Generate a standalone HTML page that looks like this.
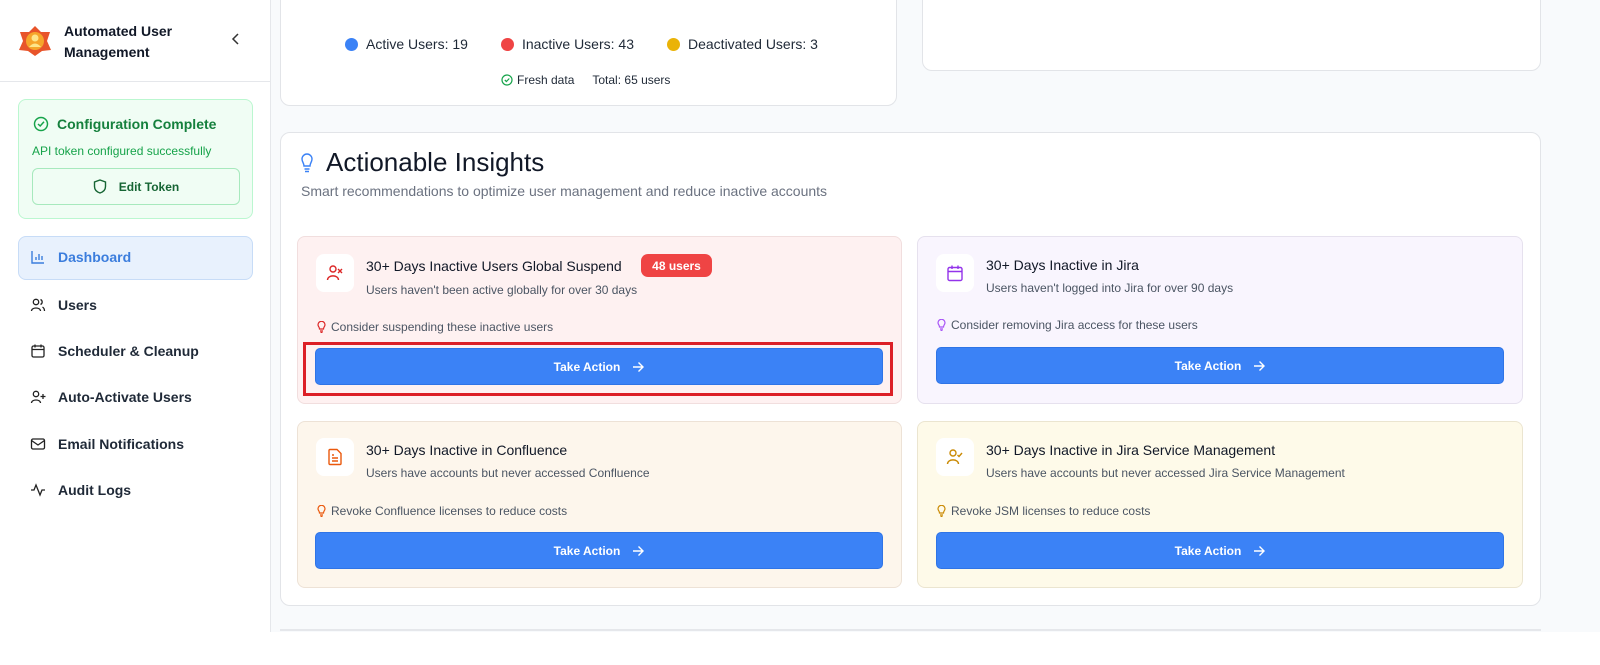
<!DOCTYPE html>
<html><head><meta charset="utf-8"><style>
*{box-sizing:border-box;margin:0;padding:0}
body{width:1600px;height:665px;overflow:hidden;background:#fff;font-family:"Liberation Sans",sans-serif;color:#111827;position:relative}
.abs{position:absolute}
.side{left:0;top:0;width:271px;height:632px;background:#fff;border-right:1px solid #e5e7eb}
.main{left:271px;top:0;width:1329px;height:632px;background:#f8fafc}
.card{background:#fff;border:1px solid #e2e4e8;border-radius:10px}
.nav{position:absolute;left:30px;font-size:14px;font-weight:bold;color:#1f2937;display:flex;align-items:center;gap:12px}
.ic{border-radius:8px;background:#fff;width:38px;height:38px;display:flex;align-items:center;justify-content:center}
.ttl{font-size:14px;color:#111827}
.sub{font-size:12px;color:#4b5563}
.tip{font-size:12px;color:#4b5563;display:flex;align-items:center;gap:5px}
.btn{position:absolute;background:#3b82f6;border-radius:5px;color:#fff;font-size:12px;font-weight:bold;display:flex;align-items:center;justify-content:center;gap:12px;border:1px solid #2f74e6}
</style></head><body>
<div class="abs side">
 <svg class="abs" style="left:17px;top:24px" width="36" height="34" viewBox="0 0 36 34"><path d="M18 2 L24 8 L33 8 L30 17 L34 26 L25 27 L18 32 L11 27 L2 26 L6 17 L3 8 L12 8Z" fill="#e8542a"/><circle cx="18" cy="17" r="9" fill="#f6a52a"/><circle cx="18" cy="14" r="3.5" fill="#fde68a"/><path d="M12 23 Q18 16 24 23" fill="#fde68a"/></svg>
 <div class="abs" style="left:64px;top:21px;font-size:14px;font-weight:bold;line-height:21px">Automated User<br>Management</div>
 <svg class="abs" style="left:231px;top:33px" width="10" height="12" viewBox="0 0 10 12"><path d="M7 1 L2 6 L7 11" stroke="#333" stroke-width="1.5" fill="none"/></svg>
 <div class="abs" style="left:0;top:81px;width:270px;border-top:1px solid #e5e7eb"></div>
 <div class="abs" style="left:18px;top:99px;width:235px;height:120px;background:#f0fdf4;border:1px solid #bbf7d0;border-radius:8px">
  <svg class="abs" style="left:14px;top:16px" width="16" height="16" viewBox="0 0 16 16"><circle cx="8" cy="8" r="6.5" stroke="#16a34a" stroke-width="1.5" fill="none"/><path d="M5 8 L7.2 10 L11 5.8" stroke="#16a34a" stroke-width="1.5" fill="none"/></svg>
  <div class="abs" style="left:38px;top:16px;font-size:14px;font-weight:bold;color:#15803d">Configuration Complete</div>
  <div class="abs" style="left:13px;top:44px;font-size:12px;color:#16a34a">API token configured successfully</div>
  <div class="abs" style="left:13px;top:68px;width:208px;height:37px;border:1px solid #a7e9bd;border-radius:6px;display:flex;align-items:center;justify-content:center;gap:12px;font-size:12px;font-weight:bold;color:#166534">
   <svg width="14" height="15" viewBox="0 0 14 15"><path d="M7 1 L12.5 3 V7.5 C12.5 11 10 13 7 14 C4 13 1.5 11 1.5 7.5 V3Z" stroke="#166534" stroke-width="1.4" fill="none"/></svg>Edit Token</div>
 </div>
 <div class="abs" style="left:18px;top:236px;width:235px;height:44px;background:#e8f1fd;border:1px solid #c7dcf7;border-radius:8px"></div>
 <div class="nav" style="top:249px;color:#3b7ddd"><svg width="16" height="16" viewBox="0 0 16 16" fill="none" stroke="#3b7ddd" stroke-width="1.4"><path d="M2 2 V14 H14 M6 11 V8 M9 11 V5 M12 11 V7"/></svg>Dashboard</div>
 <div class="nav" style="top:297px"><svg width="16" height="16" viewBox="0 0 16 16" fill="none" stroke="#222" stroke-width="1.3"><circle cx="6" cy="5" r="2.7"/><path d="M1.5 14 C1.5 10 10.5 10 10.5 14 M10.5 2.5 A2.7 2.7 0 0 1 10.5 7.5 M12.5 10 C14 11 14.5 12.5 14.5 14"/></svg>Users</div>
 <div class="nav" style="top:343px"><svg width="16" height="16" viewBox="0 0 16 16" fill="none" stroke="#222" stroke-width="1.3"><rect x="2" y="3" width="12" height="11" rx="1.5"/><path d="M2 6.5 H14 M5 1.5 V4.5 M11 1.5 V4.5"/></svg>Scheduler &amp; Cleanup</div>
 <div class="nav" style="top:389px"><svg width="16" height="16" viewBox="0 0 16 16" fill="none" stroke="#222" stroke-width="1.3"><circle cx="6" cy="5" r="2.7"/><path d="M1.5 14 C1.5 10 10.5 10 10.5 14 M13 5 V10 M10.5 7.5 H15.5"/></svg>Auto-Activate Users</div>
 <div class="nav" style="top:436px"><svg width="16" height="16" viewBox="0 0 16 16" fill="none" stroke="#222" stroke-width="1.3"><rect x="1.5" y="3" width="13" height="10" rx="1.5"/><path d="M1.5 4.5 L8 9 L14.5 4.5"/></svg>Email Notifications</div>
 <div class="nav" style="top:482px"><svg width="16" height="16" viewBox="0 0 16 16" fill="none" stroke="#222" stroke-width="1.3"><path d="M1 8 H4 L6 3 L10 13 L12 8 H15"/></svg>Audit Logs</div>
</div>
<div class="abs main"></div>
<div class="abs card" style="left:280px;top:-10px;width:617px;height:116px"></div>
<div class="abs" style="left:345px;top:36px;font-size:14px;display:flex;align-items:center;color:#1f2937">
 <span style="width:13px;height:13px;border-radius:50%;background:#3b82f6;margin-right:8px"></span>Active Users: 19
 <span style="width:13px;height:13px;border-radius:50%;background:#ef4444;margin:0 8px 0 33px"></span>Inactive Users: 43
 <span style="width:13px;height:13px;border-radius:50%;background:#eab308;margin:0 8px 0 33px"></span>Deactivated Users: 3
</div>
<div class="abs" style="left:501px;top:73px;font-size:12px;color:#1f2937;display:flex;align-items:center;gap:4px"><svg width="12" height="12" viewBox="0 0 12 12"><circle cx="6" cy="6" r="5" stroke="#16a34a" fill="none" stroke-width="1.2"/><path d="M3.8 6 L5.4 7.5 L8.3 4.5" stroke="#16a34a" fill="none" stroke-width="1.2"/></svg>Fresh data<span style="margin-left:14px">Total: 65 users</span></div>
<div class="abs card" style="left:922px;top:-10px;width:619px;height:81px"></div>
<div class="abs card" style="left:280px;top:132px;width:1261px;height:474px"></div>
<svg class="abs" style="left:300px;top:153px" width="14" height="20" viewBox="0 0 14 20" fill="none" stroke="#3b82f6" stroke-width="1.4"><path d="M4 13 C4 10 2 9 2 6 A5 5 0 0 1 12 6 C12 9 10 10 10 13Z M4.5 16 H9.5 M5 18.5 H9"/></svg>
<div class="abs" style="left:326px;top:147px;font-size:26px;color:#111827">Actionable Insights</div>
<div class="abs" style="left:301px;top:183px;font-size:14px;color:#6b7280">Smart recommendations to optimize user management and reduce inactive accounts</div>

<div class="abs" style="left:297px;top:236px;width:605px;height:168px;background:#fef1f1;border:1px solid #f1dede;border-radius:8px"></div>
<div class="abs ic" style="left:316px;top:254px;width:38px;height:38px"><svg width="18" height="18" viewBox="0 0 18 18" fill="none" stroke="#dc2626" stroke-width="1.4"><circle cx="7" cy="5" r="3"/><path d="M1.5 16 C1.5 10.5 12.5 10.5 12.5 16 M12 5 L16 9 M16 5 L12 9"/></svg></div>
<div class="abs ttl" style="left:366px;top:258px">30+ Days Inactive Users Global Suspend</div>
<div class="abs" style="left:641px;top:254px;width:71px;height:23px;background:#ef4444;border-radius:7px;color:#fff;font-size:12px;font-weight:bold;display:flex;align-items:center;justify-content:center">48 users</div>
<div class="abs sub" style="left:366px;top:283px">Users haven't been active globally for over 30 days</div>
<div class="abs tip" style="left:317px;top:320px"><svg width="9" height="12" viewBox="0 0 9 12" fill="none" stroke="#dc2626" stroke-width="1.2"><path d="M2.5 8 C2.5 6 1 5.5 1 3.8 A3.5 3.5 0 0 1 8 3.8 C8 5.5 6.5 6 6.5 8Z M3 10 H6 M3.5 11.5 H5.5"/></svg>Consider suspending these inactive users</div>
<div class="abs" style="left:303px;top:342px;width:590px;height:54px;border:3px solid #dc1f26"></div>
<div class="btn" style="left:315px;top:348px;width:568px;height:37px">Take Action <svg width="12" height="12" viewBox="0 0 12 12" fill="none" stroke="#fff" stroke-width="1.4"><path d="M1 6 H11 M6.5 1.5 L11 6 L6.5 10.5"/></svg></div>

<div class="abs" style="left:917px;top:236px;width:606px;height:168px;background:#f9f5fe;border:1px solid #e6e1ee;border-radius:8px"></div>
<div class="abs ic" style="left:936px;top:254px"><svg width="18" height="18" viewBox="0 0 18 18" fill="none" stroke="#9333ea" stroke-width="1.4"><rect x="2" y="3.5" width="14" height="13" rx="1.5"/><path d="M2 7.5 H16 M6 1.5 V5 M12 1.5 V5"/></svg></div>
<div class="abs ttl" style="left:986px;top:257px">30+ Days Inactive in Jira</div>
<div class="abs sub" style="left:986px;top:281px">Users haven't logged into Jira for over 90 days</div>
<div class="abs tip" style="left:937px;top:318px"><svg width="9" height="12" viewBox="0 0 9 12" fill="none" stroke="#a855f7" stroke-width="1.2"><path d="M2.5 8 C2.5 6 1 5.5 1 3.8 A3.5 3.5 0 0 1 8 3.8 C8 5.5 6.5 6 6.5 8Z M3 10 H6 M3.5 11.5 H5.5"/></svg>Consider removing Jira access for these users</div>
<div class="btn" style="left:936px;top:347px;width:568px;height:37px">Take Action <svg width="12" height="12" viewBox="0 0 12 12" fill="none" stroke="#fff" stroke-width="1.4"><path d="M1 6 H11 M6.5 1.5 L11 6 L6.5 10.5"/></svg></div>

<div class="abs" style="left:297px;top:421px;width:605px;height:167px;background:#fdf6ec;border:1px solid #ede2d6;border-radius:8px"></div>
<div class="abs ic" style="left:316px;top:438px"><svg width="16" height="18" viewBox="0 0 16 18" fill="none" stroke="#ea580c" stroke-width="1.4"><path d="M2 2.5 A1 1 0 0 1 3 1.5 H10 L14 5.5 V15.5 A1 1 0 0 1 13 16.5 H3 A1 1 0 0 1 2 15.5Z M5 7 H7 M5 10 H11 M5 13 H11"/></svg></div>
<div class="abs ttl" style="left:366px;top:442px">30+ Days Inactive in Confluence</div>
<div class="abs sub" style="left:366px;top:466px">Users have accounts but never accessed Confluence</div>
<div class="abs tip" style="left:317px;top:504px"><svg width="9" height="12" viewBox="0 0 9 12" fill="none" stroke="#ea580c" stroke-width="1.2"><path d="M2.5 8 C2.5 6 1 5.5 1 3.8 A3.5 3.5 0 0 1 8 3.8 C8 5.5 6.5 6 6.5 8Z M3 10 H6 M3.5 11.5 H5.5"/></svg>Revoke Confluence licenses to reduce costs</div>
<div class="btn" style="left:315px;top:532px;width:568px;height:37px">Take Action <svg width="12" height="12" viewBox="0 0 12 12" fill="none" stroke="#fff" stroke-width="1.4"><path d="M1 6 H11 M6.5 1.5 L11 6 L6.5 10.5"/></svg></div>

<div class="abs" style="left:917px;top:421px;width:606px;height:167px;background:#fefae9;border:1px solid #ebe5d0;border-radius:8px"></div>
<div class="abs ic" style="left:936px;top:438px"><svg width="18" height="18" viewBox="0 0 18 18" fill="none" stroke="#ca8a04" stroke-width="1.4"><circle cx="7" cy="5" r="3"/><path d="M1.5 16 C1.5 10.5 12.5 10.5 12.5 16 M11.5 7 L13 8.5 L16 5"/></svg></div>
<div class="abs ttl" style="left:986px;top:442px">30+ Days Inactive in Jira Service Management</div>
<div class="abs sub" style="left:986px;top:466px">Users have accounts but never accessed Jira Service Management</div>
<div class="abs tip" style="left:937px;top:504px"><svg width="9" height="12" viewBox="0 0 9 12" fill="none" stroke="#ca8a04" stroke-width="1.2"><path d="M2.5 8 C2.5 6 1 5.5 1 3.8 A3.5 3.5 0 0 1 8 3.8 C8 5.5 6.5 6 6.5 8Z M3 10 H6 M3.5 11.5 H5.5"/></svg>Revoke JSM licenses to reduce costs</div>
<div class="btn" style="left:936px;top:532px;width:568px;height:37px">Take Action <svg width="12" height="12" viewBox="0 0 12 12" fill="none" stroke="#fff" stroke-width="1.4"><path d="M1 6 H11 M6.5 1.5 L11 6 L6.5 10.5"/></svg></div>

<div class="abs" style="left:280px;top:629px;width:1261px;border-top:2px solid #e5e7eb"></div>
</body></html>
